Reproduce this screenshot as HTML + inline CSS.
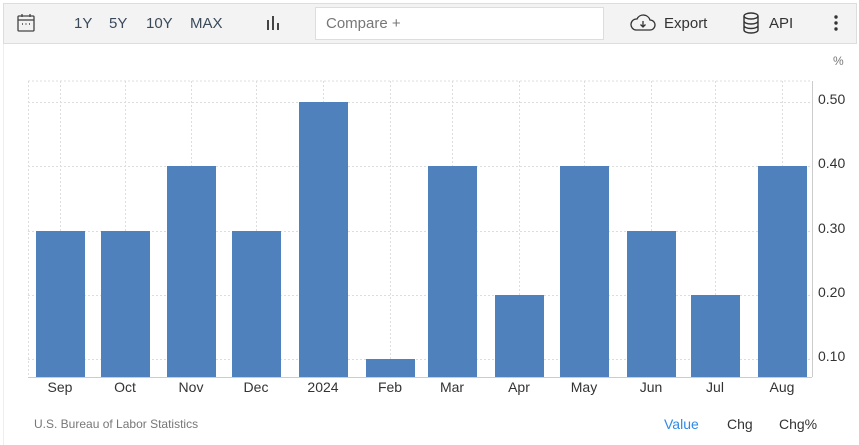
<!DOCTYPE html>
<html><head><style>
body{margin:0;width:859px;height:445px;background:#fff;font-family:"Liberation Sans",sans-serif;position:relative;overflow:hidden}
.a{position:absolute}
.tb{left:3px;top:3px;width:852px;height:39px;background:#f3f3f3;border:1px solid #ddd}
.t{color:#333;font-size:15px}
.bar{position:absolute;background:#4f81bd;width:49px;bottom:68px}
.ml{position:absolute;top:379px;font-size:14px;color:#333;width:60px;text-align:center}
.yl{position:absolute;left:818px;font-size:14px;color:#333}
</style></head><body>
<div class="a" style="left:3px;top:44px;width:1px;height:401px;background:#eee"></div>
<div class="a tb"></div>
<svg class="a" style="left:16px;top:13px" width="20" height="20" viewBox="0 0 20 20" fill="none" stroke="#444" stroke-width="1.3"><rect x="2" y="3" width="16" height="15" rx="1"/><line x1="2" y1="7" x2="18" y2="7"/><line x1="6" y1="1" x2="6" y2="4"/><line x1="14" y1="1" x2="14" y2="4"/><line x1="6" y1="11" x2="7" y2="11" stroke-width="1.6"/><line x1="9.5" y1="11" x2="10.5" y2="11" stroke-width="1.6"/><line x1="13" y1="11" x2="14" y2="11" stroke-width="1.6"/></svg>
<div class="a t" style="left:74px;top:15px;color:#3a4a5a">1Y</div>
<div class="a t" style="left:109px;top:15px;color:#3a4a5a">5Y</div>
<div class="a t" style="left:146px;top:15px;color:#3a4a5a">10Y</div>
<div class="a t" style="left:190px;top:15px;color:#3a4a5a">MAX</div>
<svg class="a" style="left:266px;top:15px" width="16" height="16"><rect x="1" y="5" width="2" height="10" fill="#444"/><rect x="6" y="1" width="2" height="14" fill="#444"/><rect x="11" y="8" width="2" height="7" fill="#444"/></svg>
<div class="a" style="left:315px;top:7px;width:287px;height:31px;background:#fff;border:1px solid #ddd"></div>
<div class="a" style="left:326px;top:15px;font-size:15px;color:#777">Compare +</div>
<svg class="a" style="left:630px;top:14px" width="26" height="18" viewBox="0 0 26 18" fill="none" stroke="#333" stroke-width="1.3"><path d="M6 16h14a5 5 0 0 0 0-10 7 7 0 0 0-13-1 5.5 5.5 0 0 0-1 11z"/><path d="M13 7v6M10.5 10.5l2.5 2.5 2.5-2.5"/></svg>
<div class="a t" style="left:664px;top:15px">Export</div>
<svg class="a" style="left:742px;top:12px" width="18" height="22" viewBox="0 0 18 22" fill="none" stroke="#333" stroke-width="1.4"><ellipse cx="9" cy="4" rx="7" ry="3"/><path d="M2 4v14c0 1.7 3 3 7 3s7-1.3 7-3V4M2 9c0 1.7 3 3 7 3s7-1.3 7-3M2 13.5c0 1.7 3 3 7 3s7-1.3 7-3"/></svg>
<div class="a t" style="left:769px;top:15px">API</div>
<svg class="a" style="left:833px;top:15px" width="6" height="16"><circle cx="3" cy="2" r="1.7" fill="#333"/><circle cx="3" cy="8" r="1.7" fill="#333"/><circle cx="3" cy="14" r="1.7" fill="#333"/></svg>
<div class="a" style="left:833px;top:54px;font-size:12px;color:#777">%</div>
<svg class="a" style="left:0;top:0" width="859" height="445">
<g stroke="#ddd" stroke-dasharray="2,2" stroke-width="1">
<line x1="28" y1="81" x2="812" y2="81"/>
<line x1="28" y1="102.5" x2="812" y2="102.5"/><line x1="28" y1="166.5" x2="812" y2="166.5"/><line x1="28" y1="231.5" x2="812" y2="231.5"/><line x1="28" y1="295.5" x2="812" y2="295.5"/><line x1="28" y1="359.5" x2="812" y2="359.5"/>
<line x1="28.5" y1="81" x2="28.5" y2="377"/>
<line x1="60.5" y1="81" x2="60.5" y2="377"/><line x1="125.5" y1="81" x2="125.5" y2="377"/><line x1="191.5" y1="81" x2="191.5" y2="377"/><line x1="256.5" y1="81" x2="256.5" y2="377"/><line x1="323.5" y1="81" x2="323.5" y2="377"/><line x1="390.5" y1="81" x2="390.5" y2="377"/><line x1="452.5" y1="81" x2="452.5" y2="377"/><line x1="519.5" y1="81" x2="519.5" y2="377"/><line x1="584.5" y1="81" x2="584.5" y2="377"/><line x1="651.5" y1="81" x2="651.5" y2="377"/><line x1="715.5" y1="81" x2="715.5" y2="377"/><line x1="782.5" y1="81" x2="782.5" y2="377"/>
</g>
<line x1="812.5" y1="81" x2="812.5" y2="377" stroke="#ccc"/>
<line x1="28" y1="377.5" x2="812" y2="377.5" stroke="#ccc"/>
</svg>
<div class="bar" style="left:36px;top:231px"></div>
<div class="bar" style="left:101px;top:231px"></div>
<div class="bar" style="left:167px;top:166px"></div>
<div class="bar" style="left:232px;top:231px"></div>
<div class="bar" style="left:299px;top:102px"></div>
<div class="bar" style="left:366px;top:359px"></div>
<div class="bar" style="left:428px;top:166px"></div>
<div class="bar" style="left:495px;top:295px"></div>
<div class="bar" style="left:560px;top:166px"></div>
<div class="bar" style="left:627px;top:231px"></div>
<div class="bar" style="left:691px;top:295px"></div>
<div class="bar" style="left:758px;top:166px"></div>
<div class="ml" style="left:30px">Sep</div><div class="ml" style="left:95px">Oct</div><div class="ml" style="left:161px">Nov</div><div class="ml" style="left:226px">Dec</div><div class="ml" style="left:293px">2024</div><div class="ml" style="left:360px">Feb</div><div class="ml" style="left:422px">Mar</div><div class="ml" style="left:489px">Apr</div><div class="ml" style="left:554px">May</div><div class="ml" style="left:621px">Jun</div><div class="ml" style="left:685px">Jul</div><div class="ml" style="left:752px">Aug</div>
<div class="yl" style="top:91px">0.50</div><div class="yl" style="top:155px">0.40</div><div class="yl" style="top:220px">0.30</div><div class="yl" style="top:284px">0.20</div><div class="yl" style="top:348px">0.10</div>
<div class="a" style="left:34px;top:417px;font-size:12px;color:#777">U.S. Bureau of Labor Statistics</div>
<div class="a" style="left:664px;top:416px;font-size:14px;color:#2d8ae6">Value</div>
<div class="a" style="left:727px;top:416px;font-size:14px;color:#333">Chg</div>
<div class="a" style="left:779px;top:416px;font-size:14px;color:#333">Chg%</div>
</body></html>
